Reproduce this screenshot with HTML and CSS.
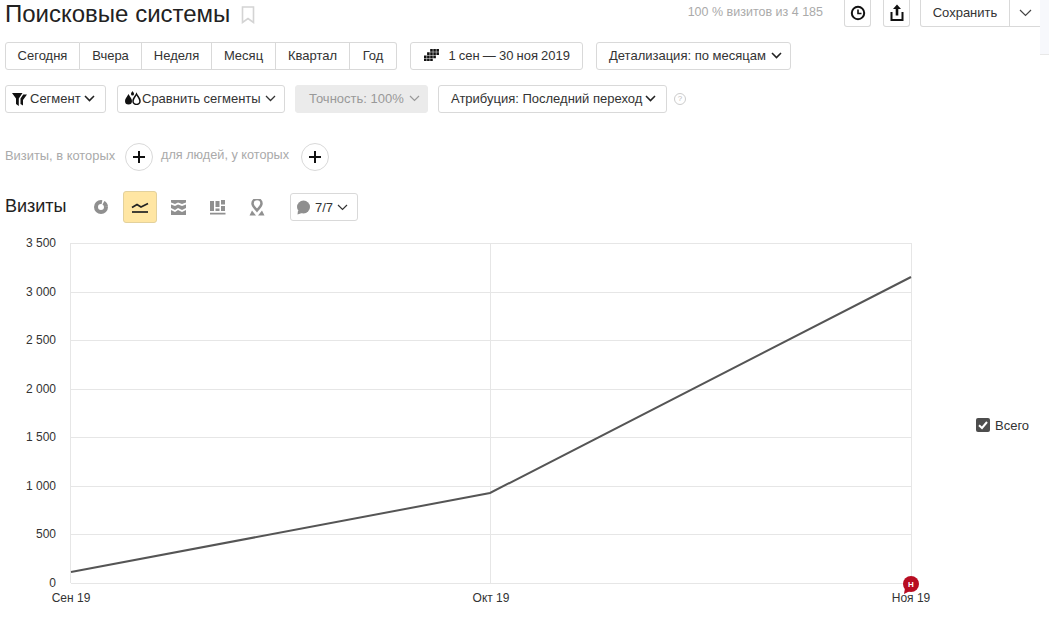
FILE: index.html
```html
<!DOCTYPE html>
<html lang="ru">
<head>
    <meta charset="UTF-8">
    <title>Поисковые системы</title>
    <link rel="stylesheet" href="styles.css">
</head>
<body>
    <div class="side-tab"></div>
    <div class="header">
        <div class="title-wrap">
            <h1>Поисковые системы</h1>
            <svg class="bookmark" width="14" height="18" viewBox="0 0 14 18"><path d="M1.500 1h11v15.500L7 12.500l-5.500 4z" fill="none" stroke="#d4d4d4" stroke-width="1.600"/></svg>
        </div>
        <div class="tools">
            <span class="visits-note">100 % визитов из 4 185</span>
            <button class="btn btn-icon">
                <svg width="16" height="16" viewBox="0 0 16 16"><circle cx="8" cy="8" r="6.200" fill="none" stroke="#111" stroke-width="2"/><path d="M8 4.500V8.500H11.500" fill="none" stroke="#111" stroke-width="1.600"/></svg>
            </button>
            <button class="btn btn-icon">
                <svg width="16" height="18" viewBox="0 0 16 18"><path d="M8 0.500L12 5H9.300V11.500H6.700V5H4z" fill="#111"/><path d="M2.500 8V16H13.500V8" fill="none" stroke="#111" stroke-width="2"/></svg>
            </button>
            <div class="save-group">
                <button class="btn save-main">Сохранить</button>
                <button class="btn save-arrow"><svg class="chev" width="13" height="8" viewBox="0 0 13 8"><path d="M1 1l5.500 5.500L12 1" fill="none" stroke="#444" stroke-width="1.200"/></svg></button>
            </div>
        </div>
    </div>

    <div class="row row-period">
        <div class="segmented">
            <button class="seg seg-today">Сегодня</button>
            <button class="seg seg-yesterday">Вчера</button>
            <button class="seg seg-week">Неделя</button>
            <button class="seg seg-month">Месяц</button>
            <button class="seg seg-quarter">Квартал</button>
            <button class="seg seg-year">Год</button>
        </div>
        <button class="btn btn-date">
            <svg width="16" height="12" viewBox="0 0 15 11" fill="#111" preserveAspectRatio="none"><path d="M6 0h2.500v2.500H6zM9 0h2.500v2.500H9zM12 0h2.500v2.500H12zM3 3h2.500v2.500H3zM6 3h2.500v2.500H6zM9 3h2.500v2.500H9zM12 3h2.500v2.500H12zM0 6h2.500v2.500H0zM3 6h2.500v2.500H3zM6 6h2.500v2.500H6zM9 6h2.500v2.500H9zM0 9h2.500v2H0zM3 9h2.500v2H3zM6 9h2.500v2H6z"/></svg>
            1 сен — 30 ноя 2019
        </button>
        <button class="btn btn-detail">Детализация: по месяцам
            <svg class="chev" width="11" height="7" viewBox="0 0 11 7"><path d="M1 1l4.500 4.500L10 1" fill="none" stroke="#222" stroke-width="1.600"/></svg>
        </button>
    </div>

    <div class="row row-filters">
        <button class="btn btn-segment">
            <svg width="15" height="13" viewBox="0 0 15 13" fill="#111"><path d="M0 0h10.500L6.800 5.500V13L4 11V5.500zM11.200 1.500H15L11 7v5.500L8.500 11V5.500z"/></svg>
            Сегмент
            <svg class="chev" width="11" height="7" viewBox="0 0 11 7"><path d="M1 1l4.500 4.500L10 1" fill="none" stroke="#222" stroke-width="1.600"/></svg>
        </button>
        <button class="btn btn-compare">
            <svg width="17" height="14" viewBox="0 0 17 14"><path d="M4.500 3C6 6 8 7.500 8 10a3.500 3.500 0 0 1-7 0C1 7.500 3 6 4.500 3z" fill="#111"/><path d="M12.500 3C14 6 16 7.500 16 10a3.500 3.500 0 0 1-7 0C9 7.500 11 6 12.500 3z" fill="#fff" stroke="#111" stroke-width="1.500"/><path d="M8.500 0C9.300 1.300 10 2 10 3a1.500 1.500 0 0 1-3 0C7 2 7.700 1.300 8.500 0z" fill="#111"/></svg>
            Сравнить сегменты
            <svg class="chev" width="11" height="7" viewBox="0 0 11 7"><path d="M1 1l4.500 4.500L10 1" fill="none" stroke="#333" stroke-width="1.300"/></svg>
        </button>
        <button class="btn btn-accuracy">Точность: 100%
            <svg class="chev" width="11" height="7" viewBox="0 0 11 7"><path d="M1 1l4.500 4.500L10 1" fill="none" stroke="#999" stroke-width="1.200"/></svg>
        </button>
        <button class="btn btn-attr">Атрибуция: Последний переход
            <svg class="chev" width="11" height="7" viewBox="0 0 11 7"><path d="M1 1l4.500 4.500L10 1" fill="none" stroke="#222" stroke-width="1.600"/></svg>
        </button>
        <span class="help">?</span>
    </div>

    <div class="row row-conditions">
        <span class="cond-label">Визиты, в которых</span>
        <button class="add-btn"><svg width="14" height="14" viewBox="0 0 14 14"><path d="M7 1v12M1 7h12" stroke="#111" stroke-width="2"/></svg></button>
        <span class="cond-label cond-people">для людей, у которых</span>
        <button class="add-btn"><svg width="14" height="14" viewBox="0 0 14 14"><path d="M7 1v12M1 7h12" stroke="#111" stroke-width="2"/></svg></button>
    </div>

    <div class="row row-chart-tools">
        <h2>Визиты</h2>
        <div class="chart-types">
            <span class="type-btn">
                <svg width="16" height="16" viewBox="0 0 16 16"><circle cx="8" cy="8" r="5" fill="none" stroke="#8f8f8f" stroke-width="4" stroke-dasharray="24 1.500 5 1"/></svg>
            </span>
            <span class="type-btn type-active">
                <svg width="18" height="14" viewBox="0 0 18 14"><path d="M1 7.500L6 4.500 10 7 17 3.500" fill="none" stroke="#222" stroke-width="1.700"/><path d="M1 12h16" stroke="#222" stroke-width="1.700"/></svg>
            </span>
            <span class="type-btn">
                <svg width="16" height="15" viewBox="0 0 16 15" fill="#909090"><path d="M0 0h15v2.500L11 4 7 2.500 4 4 0 2.500zM0 4.500L4 6l3-1.500L11 6l4-1.500V8l-4 2-4-2-3 2-4-2zM0 10l4 2 3-2 4 2 4-2v5H0z"/></svg>
            </span>
            <span class="type-btn">
                <svg width="16" height="15" viewBox="0 0 16 15" fill="#909090"><path d="M0 1h4v10H0zM5.500 1h4v6h-4zM5.500 8.500h4V11h-4zM11 0h4v4.500h-4zM11 6h4v5h-4zM0 12.800h15.500V14.500H0z"/></svg>
            </span>
            <span class="type-btn">
                <svg width="16" height="17" viewBox="0 0 16 17"><path d="M8 11.500C5.500 8.500 3.500 7 3.500 4.500a4.500 4.500 0 0 1 9 0C12.500 7 10.500 8.500 8 11.500z" fill="none" stroke="#909090" stroke-width="2.500"/><path d="M0.500 16.500L3 11.500l4 5zM15.500 16.500L13 11.500l-4 5z" fill="#909090"/></svg>
            </span>
        </div>
        <button class="btn btn-notes">
            <svg width="15" height="15" viewBox="0 0 15 15"><circle cx="7.500" cy="7" r="6.500" fill="#8f8f8f"/><path d="M2 10.500L1.500 14.500 6 13z" fill="#8f8f8f"/></svg>
            7/7
            <svg class="chev" width="11" height="7" viewBox="0 0 11 7"><path d="M1 1l4.500 4.500L10 1" fill="none" stroke="#333" stroke-width="1.200"/></svg>
        </button>
    </div>

    <div class="chart-row">
        <svg class="chart" width="960" height="380" viewBox="0 0 960 380">
            <g stroke="#e6e6e6" stroke-width="1">
                <path d="M71 8.500H911M71 57.500H911M71 105.500H911M71 154.500H911M71 202.500H911M71 251.500H911M71 299.500H911M71 348.500H911"/>
                <path d="M70.500 8V348M490.500 8V348M911.500 8V348"/>
            </g>
            <g class="y-labels" text-anchor="end">
                <text x="56" y="12">3 500</text>
                <text x="56" y="61">3 000</text>
                <text x="56" y="109">2 500</text>
                <text x="56" y="158">2 000</text>
                <text x="56" y="206">1 500</text>
                <text x="56" y="255">1 000</text>
                <text x="56" y="303">500</text>
                <text x="56" y="352">0</text>
            </g>
            <path d="M71 337L490 258 911 42" fill="none" stroke="#555" stroke-width="2"/>
            <g class="x-labels" text-anchor="middle">
                <text x="71" y="367">Сен 19</text>
                <text x="491" y="367">Окт 19</text>
                <text x="911" y="367">Ноя 19</text>
            </g>
            <circle cx="911" cy="349" r="8" fill="#b80d22"/>
            <path d="M905 353L904 359 910 356z" fill="#b80d22"/>
            <text class="marker-text" x="911" y="352" text-anchor="middle">Н</text>
        </svg>
        <label class="legend">
            <svg width="14" height="14" viewBox="0 0 14 14"><rect width="14" height="14" rx="2" fill="#4d4d4d"/><path d="M3 7.200L6 10l5-6" fill="none" stroke="#fff" stroke-width="2"/></svg>
            Всего
        </label>
    </div>
</body>
</html>
```

FILE: styles.css
```css
body {
    margin: 0;
    font-family: "Liberation Sans", Arial, sans-serif;
    font-size: 13px;
    color: #333;
    background: #fff;
    overflow: hidden;
}
button {
    font-family: inherit;
    font-size: 13px;
    color: #333;
    background: #fff;
    cursor: pointer;
}
.btn {
    display: flex;
    align-items: center;
    height: 28px;
    padding: 0 12px 2px;
    border: 1px solid #d9d9d9;
    border-radius: 3px;
    box-sizing: border-box;
    white-space: nowrap;
}
.chev {
    flex: none;
}
/* panel edge at the top right corner */
.side-tab {
    position: absolute;
    top: 0;
    right: 0;
    width: 9px;
    height: 54px;
    background: #f7f8fc;
    border-bottom: 1px solid #e8e8e8;
}

.header {
    display: flex;
    justify-content: space-between;
    height: 42px;
    padding-left: 5px;
    box-sizing: border-box;
}
.title-wrap {
    display: flex;
    align-items: flex-start;
}
h1 {
    margin: 0;
    font-size: 24px;
    font-weight: normal;
    line-height: 27px;
    color: #222;
}
.bookmark {
    margin: 6px 0 0 11px;
}
.tools {
    display: flex;
    align-items: flex-start;
    padding-right: 9px;
}
.visits-note {
    font-size: 12.500px;
    color: #aaa;
    margin: 5px 21px 0 0;
}
.btn-icon {
    width: 27px;
    height: 27px;
    padding: 0;
    justify-content: center;
    margin-right: 12px;
    border-top: none;
    border-radius: 0 0 3px 3px;
}
.save-group {
    display: flex;
    margin-left: -2px;
}
.save-main {
    width: 90px;
    height: 27px;
    justify-content: center;
    padding: 0 0 2px;
    border-top: none;
    border-radius: 0 0 0 3px;
}
.save-arrow {
    width: 30px;
    height: 27px;
    padding: 0;
    justify-content: center;
    border-top: none;
    border-left: none;
    border-right: none;
    border-radius: 0;
}

.row {
    display: flex;
    align-items: center;
    padding-left: 5px;
}
.row-period {
    height: 28px;
}
.segmented {
    display: flex;
    margin-right: 13px;
}
.seg {
    height: 28px;
    padding: 0 0 2px;
    border: 1px solid #d9d9d9;
    border-left: none;
    box-sizing: border-box;
}
.seg-today {
    width: 75px;
    border-left: 1px solid #d9d9d9;
    border-radius: 3px 0 0 3px;
}
.seg-yesterday { width: 62px; }
.seg-week { width: 70px; }
.seg-month { width: 64px; }
.seg-quarter { width: 74px; }
.seg-year {
    width: 47px;
    border-radius: 0 3px 3px 0;
}
.btn-date {
    width: 173px;
    padding-left: 13px;
    gap: 9px;
    margin-right: 13px;
    word-spacing: -0.500px;
}
.btn-detail {
    width: 195px;
    gap: 5px;
}

.row-filters {
    height: 28px;
    margin-top: 15px;
}
.btn-segment {
    width: 101px;
    padding: 0 6px 2px;
    gap: 3px;
    margin-right: 11px;
}
.btn-segment svg:first-child {
    margin-top: 2px;
}
.btn-compare {
    width: 168px;
    padding: 0 6px 2px;
    gap: 1px;
    margin-right: 10px;
}
.btn-compare .chev {
    margin-left: 3px;
}
.btn-accuracy {
    width: 133px;
    background: #ebebeb;
    border-color: #ebebeb;
    color: #999;
    padding: 0 13px 2px;
    gap: 5px;
    margin-right: 10px;
}
.btn-attr {
    width: 229px;
    gap: 3px;
}
.help {
    width: 12px;
    height: 12px;
    margin-left: 7px;
    border: 1px solid #ccc;
    border-radius: 50%;
    box-sizing: border-box;
    font-size: 8px;
    line-height: 10px;
    text-align: center;
    color: #bbb;
}

.row-conditions {
    height: 28px;
    margin-top: 30px;
}
.cond-label {
    font-size: 12.900px;
    color: #aaa;
    width: 120px;
    padding-bottom: 4px;
    white-space: nowrap;
}
.cond-people {
    width: 140px;
    margin-left: 8px;
    font-size: 12.700px;
}
.add-btn {
    width: 28px;
    height: 28px;
    padding: 0;
    display: flex;
    align-items: center;
    justify-content: center;
    border: 1px solid #d9d9d9;
    border-radius: 50%;
}

.row-chart-tools {
    height: 34px;
    margin-top: 19px;
}
h2 {
    margin: 0;
    width: 79px;
    padding-bottom: 2px;
    font-size: 18px;
    font-weight: normal;
    color: #222;
}
.chart-types {
    display: flex;
    align-items: center;
    gap: 5px;
    margin-right: 16px;
}
.type-btn {
    display: flex;
    align-items: center;
    justify-content: center;
    width: 34px;
    height: 32px;
    box-sizing: border-box;
}
.type-active {
    background: #ffe6a3;
    border: 1px solid #e3d19c;
    border-radius: 3px;
}
.btn-notes {
    width: 68px;
    padding: 0 5px;
    gap: 4px;
}

.chart-row {
    display: flex;
    align-items: center;
    margin-top: 11px;
}
.chart {
    display: block;
    flex: none;
}
.chart text {
    font-family: "Liberation Sans", Arial, sans-serif;
    font-size: 12px;
    fill: #333;
}
.chart .marker-text {
    font-size: 8px;
    font-weight: bold;
    fill: #fff;
}
.legend {
    display: flex;
    align-items: center;
    gap: 5px;
    margin-left: 16px;
    font-size: 13px;
}
```
